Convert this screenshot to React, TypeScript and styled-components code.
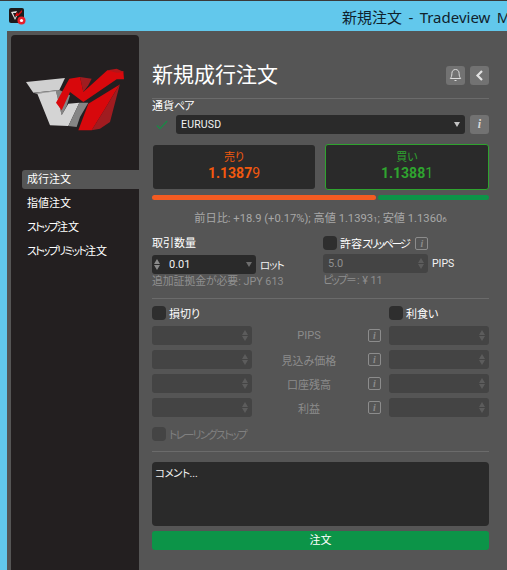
import React from "react";
import styled, { createGlobalStyle } from "styled-components";

const Global = createGlobalStyle`
  html, body { margin: 0; padding: 0; width: 507px; height: 570px; overflow: hidden; background: #62c8ec; }
  * { box-sizing: border-box; }
  body { font-family: Roboto, "Noto Sans CJK JP", sans-serif; font-feature-settings: "palt"; }
`;

const Page = styled.div`
  width: 507px; height: 570px; overflow: hidden; display: flex; flex-direction: column;
  border-top: 1px solid #3a3a3a; background: #62c8ec;
`;
const TitleBar = styled.div`
  height: 30px; flex: none; display: flex; align-items: center; padding-left: 9px;
`;
const TitleText = styled.div`
  margin-left: 316px; font: 15px/30px "Noto Sans", "Noto Sans CJK JP", sans-serif; color: #10222c;
  white-space: nowrap; padding-top: 1px; font-feature-settings: normal; word-spacing: 2.5px;
`;
const Window = styled.div`
  flex: 1; margin-left: 7px; background: #555555; display: flex; padding: 4px 0 0 4px; min-height: 0;
`;
const Sidebar = styled.aside`
  width: 128px; flex: none; background: #231f20; border-radius: 4px 4px 0 0; padding-top: 27px;
  display: flex; flex-direction: column;
`;
const LogoWrap = styled.div`
  height: 108px; padding-left: 9px;
`;
const Nav = styled.nav`
  display: flex; flex-direction: column; gap: 5px; padding-left: 11px;
`;
const NavItem = styled.div<{ $active?: boolean }>`
  height: 19px; font-size: 11px; line-height: 19px; color: #fff; padding-left: 5px;
  border-radius: 3px 0 0 3px; background: ${(p) => (p.$active ? "#555555" : "transparent")};
  white-space: nowrap;
`;
const Kana = styled.span<{ $s?: number }>`
  letter-spacing: ${(p) => p.$s ?? -1}px;
`;
const Main = styled.main`
  width: 337px; margin-left: 13px; flex: none; display: flex; flex-direction: column;
`;
const Header = styled.div`
  height: 64px; border-bottom: 1px solid #6b6b6b; display: flex; align-items: flex-start; justify-content: space-between;
  padding-top: 26px;
`;
const Title = styled.h1`
  margin: 0; font-size: 21px; line-height: 28px; font-weight: 400; color: #fff;
  white-space: nowrap; font-feature-settings: normal;
`;
const HeaderButtons = styled.div`
  display: flex; gap: 5px; padding-top: 5px;
`;
const IconButton = styled.div`
  width: 19px; height: 19px; border-radius: 3px; background: #727272; display: flex; align-items: center; justify-content: center;
  color: #d8d8d8;
`;
const InfoGlyph = styled.span`
  font: italic 700 12px/19px "Liberation Serif", serif; color: #d8d8d8;
`;
const SmallLabel = styled.div`
  font-size: 11px; line-height: 14px; color: #fff; margin-top: 1px;
`;
const PairRow = styled.div`
  display: flex; align-items: center; margin-top: 1px; height: 19px;
`;
const CheckSlot = styled.div`
  width: 24px; flex: none; padding-left: 4px; display: flex; align-items: center; color: #1a8a46;
`;
const PairSelect = styled.div`
  width: 289px; height: 19px; background: #2a2a2a; border-radius: 3px; padding: 0 5px; display: flex; align-items: center;
  justify-content: space-between; color: #f2f2f2; font-size: 10.5px; letter-spacing: 0.2px; margin-right: 5px;
`;
const Caret = styled.span<{ $c?: string }>`
  width: 0; height: 0; border-left: 3px solid transparent; border-right: 3px solid transparent; border-top: 5px solid ${(p) => p.$c || "#c4c4c4"};
`;
const QuoteRow = styled.div`
  display: flex; justify-content: space-between; align-items: center; margin-top: 10px; height: 46px;
`;
const Quote = styled.div<{ $buy?: boolean }>`
  background: #2a2a2a; border-radius: 3px; text-align: center;
  width: ${(p) => (p.$buy ? "164px" : "162px")};
  height: ${(p) => (p.$buy ? "46px" : "44px")};
  margin-left: ${(p) => (p.$buy ? "0" : "1px")};
  border: ${(p) => (p.$buy ? "1px solid #2fa32f" : "none")};
  color: ${(p) => (p.$buy ? "#2fa52f" : "#f2590f")};
  padding-top: 6px;
`;
const QuoteSide = styled.div`
  font-size: 11px; line-height: 14px;
`;
const QuotePrice = styled.div`
  font-size: 14px; line-height: 17px; font-weight: 700;
  small { font-size: 14px; font-weight: 400; }
`;
const Spread = styled.div`
  display: flex; gap: 2px; margin-top: 5px; height: 5px;
`;
const SpreadBar = styled.div<{ $color: string }>`
  border-radius: 3px; background: ${(p) => p.$color};
`;
const Stats = styled.div`
  margin-top: 11px; text-align: center; font-size: 11.2px; line-height: 15px; color: #a8a8a8; white-space: nowrap;
  small { font-size: 8px; }
`;
const TradeGrid = styled.div`
  display: grid; grid-template-columns: 171px 166px; margin-top: 9px; height: 62px;
`;
const Col = styled.div`
  display: flex; flex-direction: column;
`;
const Label = styled.div`
  font-size: 11px; line-height: 16px; color: #fff; height: 16px; white-space: nowrap;
`;
const LabelRow = styled.div`
  display: flex; align-items: center; height: 16px; gap: 3px;
  margin-top: -1px; font-size: 11px; color: #fff; white-space: nowrap;
`;
const Check = styled.span<{ $dim?: boolean }>`
  width: 14px; height: 14px; border-radius: 4px; flex: none; background: ${(p) => (p.$dim ? "#444444" : "#2e2e2e")};
`;
const InputRow = styled.div`
  display: flex; align-items: center; gap: 4px; margin-top: 3px; height: 19px;
`;
const Input = styled.div<{ $w: number; $disabled?: boolean }>`
  width: ${(p) => p.$w}px; height: 19px; flex: none; border-radius: 3px; background: ${(p) => (p.$disabled ? "#444444" : "#2a2a2a")};
  color: ${(p) => (p.$disabled ? "#8f8f8f" : "#f2f2f2")}; font-size: 11px; display: flex; align-items: center; justify-content: space-between;
  padding: 0 4px 0 2px;
`;
const Value = styled.span<{ $pad: number }>`
  flex: 1; padding-left: ${(p) => p.$pad}px;
`;
const Spinner = styled.span<{ $c?: string }>`
  display: flex; flex-direction: column; gap: 1px; flex: none;
  i { display: block; width: 0; height: 0; border-left: 3px solid transparent; border-right: 3px solid transparent; }
  i:first-child { border-bottom: 5px solid ${(p) => p.$c || "#5c5c5c"}; }
  i:last-child { border-top: 5px solid ${(p) => p.$c || "#5c5c5c"}; }
`;
const Unit = styled.span`
  font-size: 10.5px; color: #f2f2f2; white-space: nowrap;
`;
const Hint = styled.div`
  font-size: 10.8px; line-height: 14px; color: #8f8f8f; white-space: nowrap; margin-top: 1px;
`;
const Divider = styled.div<{ $mt?: number }>`
  height: 1px; background: #6b6b6b; flex: none; margin-top: ${(p) => p.$mt ?? 0}px;
`;
const OutlineInfo = styled.span<{ $ml?: number }>`
  width: 13px; height: 13px; flex: none; border: 1px solid #8c8c8c; border-radius: 2px; display: flex; align-items: center; justify-content: center;
  font: italic 700 10px/11px "Liberation Serif", serif; color: #8c8c8c; margin-left: ${(p) => p.$ml ?? 0}px;
`;
const StopsHead = styled.div`
  display: grid; grid-template-columns: 237px 100px; margin-top: 7px; height: 16px;
`;
const StopsGrid = styled.div`
  display: grid; grid-template-columns: 100px 116px 21px 100px; grid-auto-rows: 19px; row-gap: 5px; margin-top: 4px; align-items: center;
`;
const StopBox = styled.div`
  height: 19px; border-radius: 3px; background: #444444; display: flex; align-items: center; justify-content: flex-end; padding-right: 4px;
`;
const StopLabel = styled.div`
  text-align: center; font-size: 11px; color: #8c8c8c; white-space: nowrap; padding-right: 2px;
`;
const Trailing = styled.div`
  display: flex; align-items: center; gap: 3px; margin-top: 9px; height: 16px; font-size: 11px; color: #808080; white-space: nowrap;
`;
const Comment = styled.div`
  height: 64px; margin-top: 10px; background: #2a2a2a; border-radius: 4px; color: #f2f2f2; font-size: 10.5px; line-height: 15px; padding: 4px 3px;
`;
const Submit = styled.div`
  height: 19px; margin-top: 5px; background: #0c9448; border-radius: 3px; color: #fff; text-align: center; font-size: 11px; line-height: 19px;
`;
const AppIcon = styled.svg`
  flex: none; display: block;
`;
const LogoSvg = styled.svg`
  display: block;
`;

function Logo() {
  return (
    <LogoSvg width="110" height="72" viewBox="0 0 330 216">
      <polygon points="18,60 135,48 118,84 40,92" fill="#d0d0d0" />
      <polygon points="40,92 118,84 108,90 52,96" fill="#9a9a9a" />
      <polygon points="108,88 118,84 150,100 140,132 125,160" fill="#858585" />
      <polygon points="52,95 108,88 125,160 145,125 178,122 145,192 90,190" fill="#d4d4d4" />
      <polygon points="145,192 178,122 205,122 180,165 170,195" fill="#858585" />
      <polygon points="180,45 215,50 205,70 190,90" fill="#a01c20" />
      <polygon points="108,122 148,50 180,45 190,90 262,25 310,28 312,52 290,52 190,120 150,90 125,145" fill="#d8080c" />
      <polygon points="262,25 290,20 312,30 290,32" fill="#b41418" />
      <polygon points="215,205 255,140 300,65 270,180 240,200" fill="#a01c20" />
      <polygon points="175,205 205,125 298,68 255,140 215,205" fill="#d8080c" />
    </LogoSvg>
  );
}

const spin = (
  <Spinner>
    <i />
    <i />
  </Spinner>
);

function StopRow({ label }: { label: React.ReactNode }) {
  return (
    <>
      <StopBox>{spin}</StopBox>
      <StopLabel>{label}</StopLabel>
      <OutlineInfo>i</OutlineInfo>
      <StopBox>{spin}</StopBox>
    </>
  );
}

export default function App() {
  return (
    <Page>
      <Global />
      <TitleBar>
        <AppIcon width="17" height="17" viewBox="0 0 17 17">
          <rect width="15" height="15" rx="2" fill="#1d1a1b" />
          <polygon points="2,4 8,3 7,5 4,5 6,10 8,6 9,6 6,12" fill="#e0e0e0" />
          <polygon points="6,8 8,4 9,6 13,2 13,4 9,8" fill="#d90a0e" />
          <circle cx="12.5" cy="12.5" r="4" fill="#e8202a" />
          <circle cx="12.5" cy="12.5" r="1.6" fill="#fff" />
        </AppIcon>
        <TitleText>新規注文 - Tradeview M</TitleText>
      </TitleBar>
      <Window>
        <Sidebar>
          <LogoWrap>
            <Logo />
          </LogoWrap>
          <Nav>
            <NavItem $active>成行注文</NavItem>
            <NavItem>指値注文</NavItem>
            <NavItem>
              <Kana $s={-1.8}>ストップ</Kana>注文
            </NavItem>
            <NavItem>
              <Kana $s={-1.8}>ストップリミット</Kana>注文
            </NavItem>
          </Nav>
        </Sidebar>
        <Main>
          <Header>
            <Title>新規成行注文</Title>
            <HeaderButtons>
              <IconButton>
                <svg width="13" height="15" viewBox="0 0 13 15" fill="none" stroke="#dcdcdc" strokeWidth="1">
                  <path d="M6.5 1.5c-2.4 0-3.6 1.8-3.6 3.8 0 2.6-.6 4-1.6 5.2h10.4c-1-1.2-1.6-2.6-1.6-5.2 0-2-1.2-3.8-3.6-3.8z" />
                  <path d="M5.5 12.5h2" />
                </svg>
              </IconButton>
              <IconButton>
                <svg width="9" height="13" viewBox="0 0 9 13" fill="none" stroke="#e2e2e2" strokeWidth="2.2">
                  <path d="M7 2 2.5 6.5 7 11" />
                </svg>
              </IconButton>
            </HeaderButtons>
          </Header>
          <SmallLabel>通貨<Kana>ペア</Kana></SmallLabel>
          <PairRow>
            <CheckSlot>
              <svg width="12" height="10" viewBox="0 0 12 10" fill="none" stroke="currentColor" strokeWidth="1.3">
                <path d="M.8 5.5 4 8.6 11.2 1" />
              </svg>
            </CheckSlot>
            <PairSelect>
              EURUSD
              <Caret />
            </PairSelect>
            <IconButton>
              <InfoGlyph>i</InfoGlyph>
            </IconButton>
          </PairRow>
          <QuoteRow>
            <Quote>
              <QuoteSide>売り</QuoteSide>
              <QuotePrice>
                1.1387<small>9</small>
              </QuotePrice>
            </Quote>
            <Quote $buy>
              <QuoteSide>買い</QuoteSide>
              <QuotePrice>
                1.1388<small>1</small>
              </QuotePrice>
            </Quote>
          </QuoteRow>
          <Spread>
            <SpreadBar $color="#f35b22" style={{ width: 224 }} />
            <SpreadBar $color="#0c9448" style={{ flex: 1 }} />
          </Spread>
          <Stats>
            前日比: +18.9 (+0.17%); 高値 1.1393<small>1</small>; 安値 1.1360<small>6</small>
          </Stats>
          <TradeGrid>
            <Col>
              <Label>取引数量</Label>
              <InputRow>
                <Input $w={104}>
                  <Spinner $c="#8a8a8a">
                    <i />
                    <i />
                  </Spinner>
                  <Value $pad={9}>0.01</Value>
                  <Caret $c="#6e6e6e" />
                </Input>
                <Unit><Kana>ロット</Kana></Unit>
              </InputRow>
              <Hint>追加証拠金が必要: JPY 613</Hint>
            </Col>
            <Col>
              <LabelRow>
                <Check />
                <span>許容<Kana $s={-2.3}>スリッページ</Kana></span>
                <OutlineInfo $ml={4}>i</OutlineInfo>
              </LabelRow>
              <InputRow>
                <Input $w={105} $disabled>
                  <Value $pad={3}>5.0</Value>
                  {spin}
                </Input>
                <Unit>PIPS</Unit>
              </InputRow>
              <Hint><Kana $s={-1.8}>ピップ</Kana>＝: ¥ 11</Hint>
            </Col>
          </TradeGrid>
          <Divider />
          <StopsHead>
            <LabelRow>
              <Check />
              損切り
            </LabelRow>
            <LabelRow>
              <Check />
              利食い
            </LabelRow>
          </StopsHead>
          <StopsGrid>
            <StopRow label="PIPS" />
            <StopRow label="見込み価格" />
            <StopRow label="口座残高" />
            <StopRow label="利益" />
          </StopsGrid>
          <Trailing>
            <Check $dim />
            <Kana $s={-1.8}>トレーリングストップ</Kana>
          </Trailing>
          <Divider $mt={9} />
          <Comment><Kana $s={-0.5}>コメント</Kana>...</Comment>
          <Submit>注文</Submit>
        </Main>
      </Window>
    </Page>
  );
}
